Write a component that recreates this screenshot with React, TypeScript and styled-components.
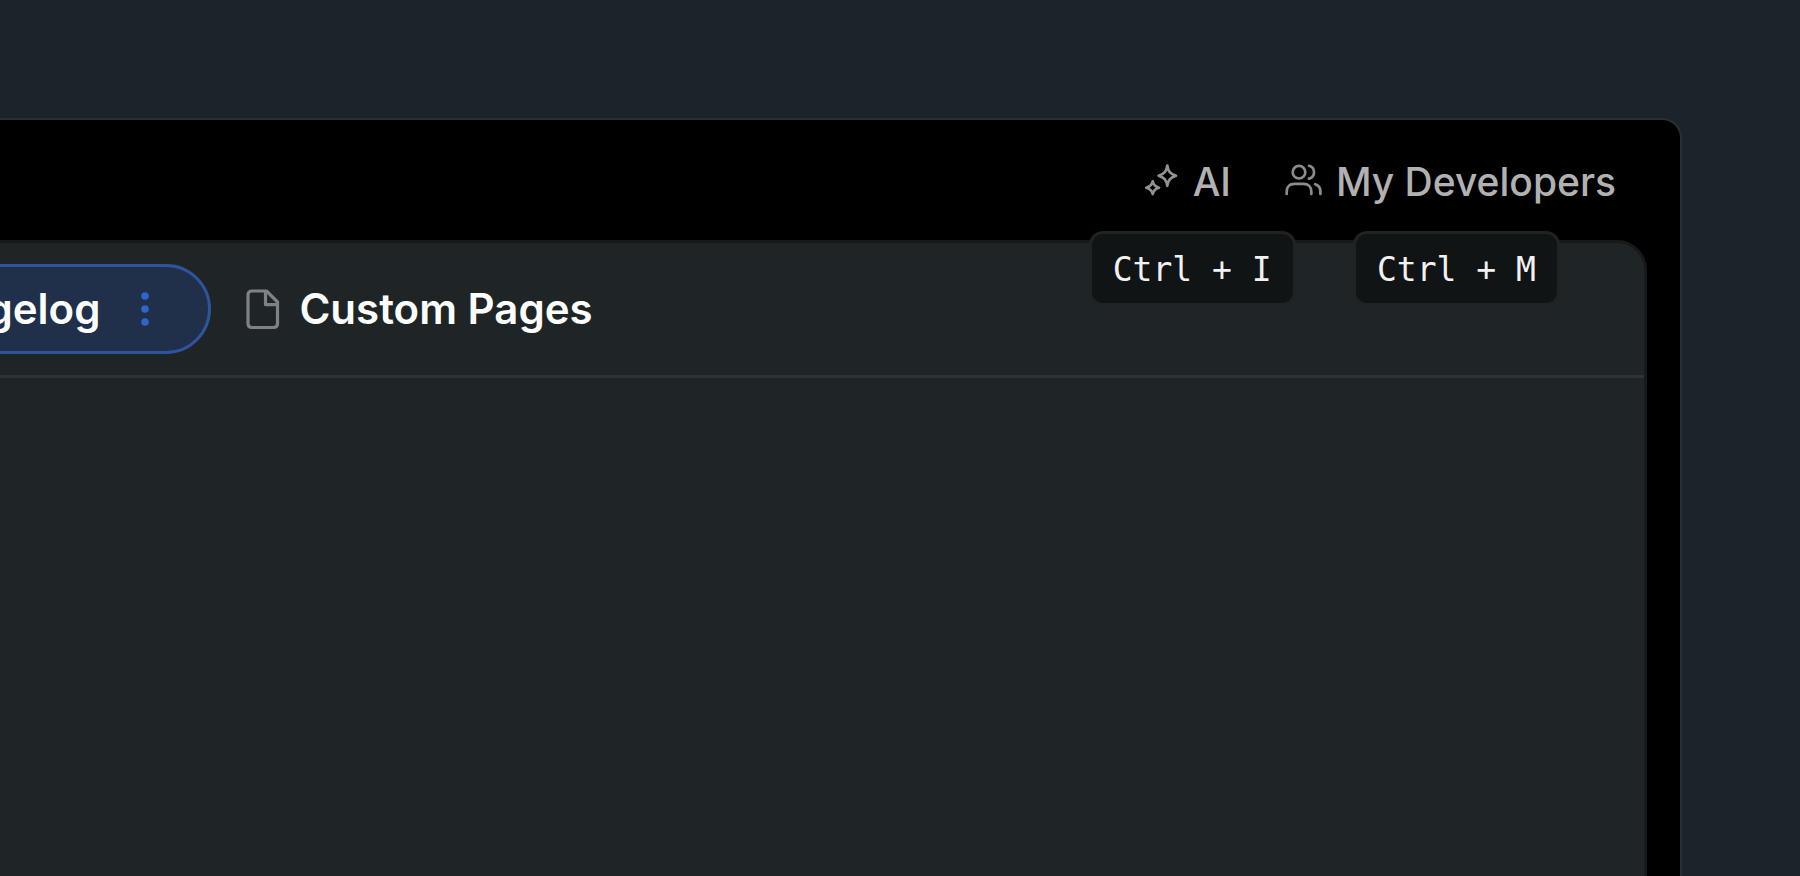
import React from "react";
import styled, { createGlobalStyle } from "styled-components";

const GlobalStyle = createGlobalStyle`
  *, *::before, *::after { box-sizing: border-box; }
  body {
    margin: 0;
    background: #1c242b;
    font-family: Inter, "Liberation Sans", sans-serif;
    color: #ffffff;
  }
  button { font: inherit; color: inherit; background: none; border: 0; margin: 0; padding: 0; cursor: pointer; }
`;

const Screen = styled.div`
  display: flex;
  flex-direction: column;
  min-height: 100vh;
  padding: 118px 118px 0 0;
  overflow: hidden;
`;

const Frame = styled.div`
  flex: 1;
  display: flex;
  flex-direction: column;
  margin-left: -240px;
  padding-right: 33px;
  background: #000000;
  border: 2px solid #2a2f31;
  border-bottom: 0;
  border-radius: 20px 20px 0 0;
`;

const Header = styled.header`
  display: flex;
  justify-content: flex-end;
  align-items: center;
  gap: 54px;
  height: 120px;
  padding: 4px 31px 0 0;
`;

const HeaderItem = styled.div`
  position: relative;
`;

const HeaderButton = styled.button`
  display: flex;
  align-items: center;
  gap: 14px;
  color: #b1b1b1;
  font-size: 39px;
  font-weight: 500;
  line-height: 48px;
  white-space: nowrap;
`;

const Shortcut = styled.kbd<{ $left: number }>`
  position: absolute;
  top: 73px;
  left: ${(p) => p.$left}px;
  z-index: 1;
  padding: 13px 21px 11px;
  background: #111415;
  border: 3px solid #1f2324;
  border-radius: 14px;
  color: #f1f1f1;
  font-family: "DejaVu Sans Mono", monospace;
  font-size: 33px;
  line-height: 45px;
  white-space: pre;
`;

const Panel = styled.main`
  flex: 1;
  background: #1f2527;
  border: 3px solid #171a1b;
  border-bottom: 0;
  border-radius: 0 30px 0 0;
`;

const Tabs = styled.nav`
  display: flex;
  align-items: center;
  gap: 35px;
  height: 135px;
  padding-left: 53px;
  border-bottom: 3px solid #2d3335;
`;

const Tab = styled.button<{ $active?: boolean }>`
  display: flex;
  align-items: center;
  gap: ${(p) => (p.$active ? "41px" : "19px")};
  height: 90px;
  padding: ${(p) => (p.$active ? "0 59px" : "0")};
  background: ${(p) => (p.$active ? "#202f4a" : "none")};
  border: ${(p) => (p.$active ? "3px solid #2f549e" : "0")};
  border-radius: 45px;
  color: #fcfdfd;
  font-size: 42px;
  font-weight: 600;
  line-height: 48px;
  white-space: nowrap;
`;

const Sparkles = () => (
  <svg width="35" height="38" viewBox="0 0 35 38" fill="none" stroke="#929292" strokeWidth="2.7" strokeLinejoin="round" aria-hidden="true">
    <path d="M23.3 2.5C24.2 8.5 26 10.7 32 12.7C26 14.7 24.2 16.9 23.3 22.9C22.4 16.9 20.6 14.7 14.6 12.7C20.6 10.7 22.4 8.5 23.3 2.5Z" />
    <path d="M8.7 18.3C9.4 22 11 23.7 15 24.7C11 25.7 9.4 27.4 8.7 31.1C8 27.4 6.4 25.7 2.2 24.7C6.4 23.7 8 22 8.7 18.3Z" />
  </svg>
);

const Users = () => (
  <svg width="37" height="38" viewBox="0 0 37 38" fill="none" stroke="#8c8c8c" strokeWidth="2.7" strokeLinecap="round" aria-hidden="true">
    <circle cx="14" cy="9.2" r="6.3" />
    <path d="M1.7 31V28.4C1.7 23.8 4.7 20.8 9.3 20.8H18.7C23.3 20.8 26.3 23.8 26.3 28.4V31" />
    <path d="M24 2.8C30.7 4.4 30.7 14 24 15.6" />
    <path d="M30.2 21.2C33.6 22.3 35.4 24.8 35.4 28.4V31" />
  </svg>
);

const Dots = () => (
  <svg width="8" height="34" viewBox="0 0 8 34" fill="#2d66c8" aria-hidden="true">
    <circle cx="4" cy="4" r="3.8" />
    <circle cx="4" cy="17" r="3.8" />
    <circle cx="4" cy="30" r="3.8" />
  </svg>
);

const Page = () => (
  <svg width="34" height="42" viewBox="0 0 34 42" fill="none" stroke="#7e8284" strokeWidth="3.2" strokeLinejoin="round" aria-hidden="true">
    <path d="M20.5 3H6C3.4 3 2 4.4 2 7V35.5C2 38.1 3.4 39.5 6 39.5H27.5C30.1 39.5 31.5 38.1 31.5 35.5V14Z" />
    <path d="M19.5 3V16.6H31.5" />
  </svg>
);

export default function App() {
  return (
    <>
      <GlobalStyle />
      <Screen>
        <Frame>
          <Header>
            <HeaderItem>
              <HeaderButton type="button"><Sparkles />AI</HeaderButton>
              <Shortcut $left={-55}>Ctrl + I</Shortcut>
            </HeaderItem>
            <HeaderItem>
              <HeaderButton type="button"><Users />My Developers</HeaderButton>
              <Shortcut $left={68}>Ctrl + M</Shortcut>
            </HeaderItem>
          </Header>
          <Panel>
            <Tabs>
              <Tab type="button" $active aria-current="page">Changelog<Dots /></Tab>
              <Tab type="button"><Page />Custom Pages</Tab>
            </Tabs>
          </Panel>
        </Frame>
      </Screen>
    </>
  );
}
